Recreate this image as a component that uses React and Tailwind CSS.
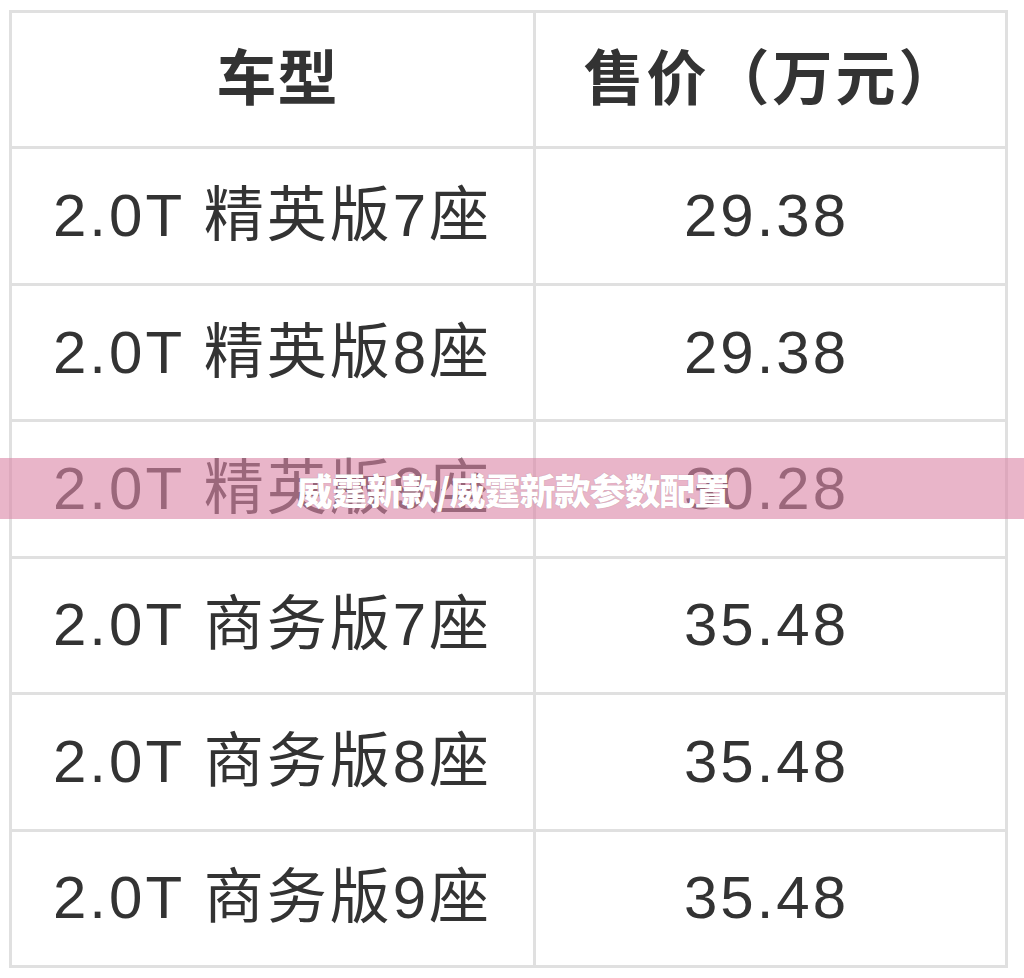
import React from "react";

const rows = [
  ["2.0T 精英版7座", "29.38"],
  ["2.0T 精英版8座", "29.38"],
  ["2.0T 精英版9座", "30.28"],
  ["2.0T 商务版7座", "35.48"],
  ["2.0T 商务版8座", "35.48"],
  ["2.0T 商务版9座", "35.48"],
];

const font = { fontFamily: '"Liberation Sans", "Noto Sans CJK SC", sans-serif' };

const App = () => {
  return (
    <div className="relative w-[1024px] h-[978px] bg-white" style={font}>
      <div className="pt-[10px] pl-[9px]">
        <div className="grid grid-cols-[524px_472px] grid-rows-7 w-[999px] h-[958px] border-l-[3px] border-t-[3px] border-[#e0e0e0] text-[#333333]">
          {/* 表头 */}
          <div className="flex items-center justify-center border-r-[3px] border-b-[3px] border-[#e0e0e0] text-[60px] font-bold tracking-[1px] pl-[10px]">
            车型
          </div>
          <div className="flex items-center justify-center border-r-[3px] border-b-[3px] border-[#e0e0e0] text-[60px] font-bold tracking-[3px] pl-[4px]">
            售价（万元）
          </div>
          {rows.map((row, index) => (
            <React.Fragment key={index}>
              <div className="flex items-center justify-center border-r-[3px] border-b-[3px] border-[#e0e0e0] text-[60px] tracking-[3px]">
                {row[0]}
              </div>
              <div className="flex items-center justify-center border-r-[3px] border-b-[3px] border-[#e0e0e0] text-[60px] tracking-[3px] pr-[8px]">
                {row[1]}
              </div>
            </React.Fragment>
          ))}
        </div>
      </div>
      {/* 水印条 */}
      <div className="absolute left-0 top-[458px] w-full h-[61px] bg-[rgba(219,136,168,0.62)] flex items-center justify-center">
        <span
          className="text-white text-[36px] font-black leading-none tracking-[-1px] pl-[2px] [text-shadow:0_0_1px_rgba(0,0,0,0.25)]"
          style={{ fontFamily: '"Noto Sans CJK SC", sans-serif' }}
        >
          威霆新款/威霆新款参数配置
        </span>
      </div>
    </div>
  );
};

export default App;
